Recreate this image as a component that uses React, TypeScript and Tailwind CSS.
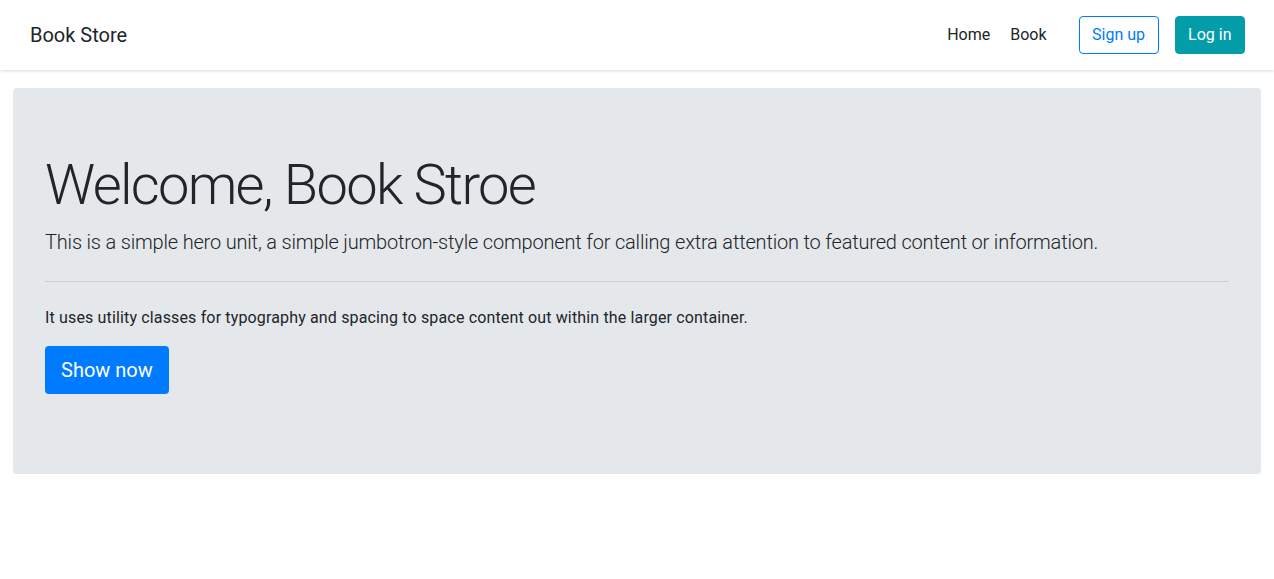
import React from 'react';

export default function App() {
  return (
    <div className="min-h-[579px] bg-white text-[#212529] font-['Roboto','Liberation_Sans',sans-serif]">
      <nav className="flex h-[70px] items-center justify-between pl-[30px] pr-[29px] shadow-[0_1px_3px_rgba(0,0,0,0.15)]">
        <a className="text-[20px] leading-[30px]">Book Store</a>
        <div className="flex items-center">
          <ul className="flex items-center">
            <li className="px-[10px] text-[16px]">Home</li>
            <li className="px-[10px] text-[16px]">Book</li>
          </ul>
          <button className="ml-[22px] h-[38px] rounded-[4px] border border-[#007bff] px-[12.5px] text-[16px] text-[#007bff]">
            Sign up
          </button>
          <button className="ml-4 h-[38px] rounded-[4px] border border-[#039ca9] bg-[#039ca9] px-[12.5px] text-[16px] text-white">
            Log in
          </button>
        </div>
      </nav>

      <div className="mx-[13px] mt-[18px] rounded-[4px] bg-[#e4e8eb] px-8 py-16">
        <h1 className="text-[56px] font-light leading-[1.2] tracking-[-1.7px]">Welcome, Book Stroe</h1>
        <p className="mt-2 text-[20px] font-light leading-[30px] tracking-[-0.18px]">
          This is a simple hero unit, a simple jumbotron-style component for calling extra attention to featured content or information.
        </p>
        <hr className="my-6 border-t border-[#cbcfd3]" />
        <p className="mb-4 text-[16px] leading-6 tracking-[0.15px]">
          It uses utility classes for typography and spacing to space content out within the larger container.
        </p>
        <p className="mb-4">
          <button className="h-12 rounded-[4px] bg-[#007bff] px-4 text-[20px] text-white">Show now</button>
        </p>
      </div>
    </div>
  );
}
